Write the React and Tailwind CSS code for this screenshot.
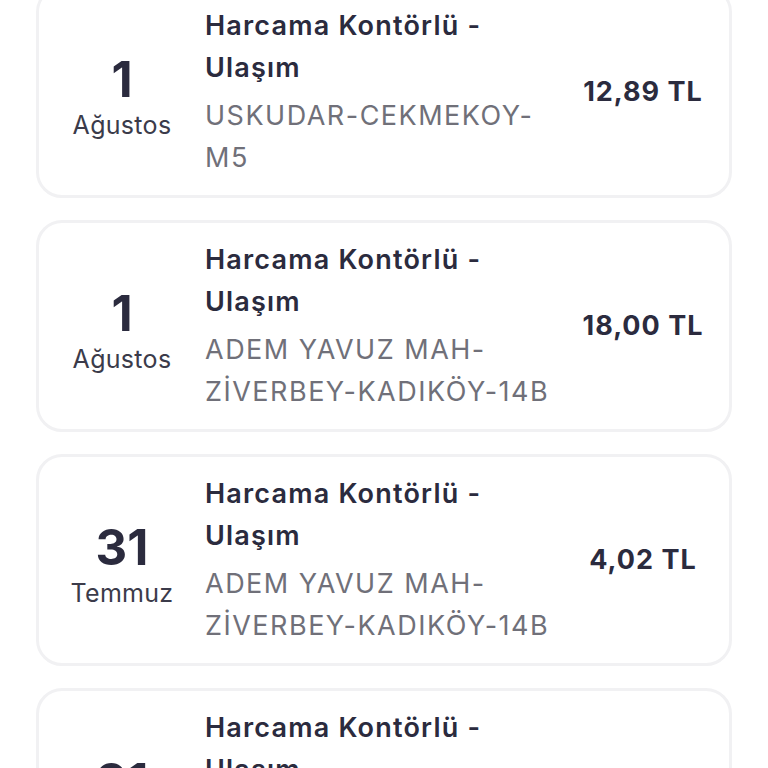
const items = [
  { day: "1", month: "Ağustos", route: "USKUDAR-CEKMEKOY-M5", amount: "12,89 TL" },
  { day: "1", month: "Ağustos", route: "ADEM YAVUZ MAH-ZİVERBEY-KADIKÖY-14B", amount: "18,00 TL" },
  { day: "31", month: "Temmuz", route: "ADEM YAVUZ MAH-ZİVERBEY-KADIKÖY-14B", amount: "4,02 TL" },
  { day: "31", month: "Temmuz", route: "ADEM YAVUZ MAH-ZİVERBEY-KADIKÖY-14B", amount: "4,02 TL" },
];

function TxCard({ item }) {
  return (
    <div className="grid grid-cols-[166px_352px_1fr] items-center rounded-[26px] border-[3px] border-[#f1f1f3] bg-white py-[16px]">
      <div className="flex flex-col items-center pt-[14px]">
        <span className="text-[49px] leading-[50px] font-bold text-[#2b2b3e]">{item.day}</span>
        <span className="mt-[2px] text-[25px] leading-[36px] tracking-[0.3px] text-[#3b3b4a]">{item.month}</span>
      </div>
      <div className="flex flex-col">
        <span className="text-[27px] leading-[42px] font-semibold tracking-[1.2px] text-[#2b2b3e]">Harcama Kontörlü - Ulaşım</span>
        <span className="mt-[6px] text-[27px] leading-[42px] tracking-[1.5px] text-[#707079] break-words">{item.route}</span>
      </div>
      <div className="text-center text-[27px] font-bold tracking-[1px] text-[#2b2b3e]">{item.amount}</div>
    </div>
  );
}

export default function App() {
  return (
    <div
      className="h-[768px] overflow-hidden bg-white"
      style={{ fontFamily: "Inter, 'Noto Sans', sans-serif" }}
    >
      <div className="-mt-[14px] flex flex-col gap-[22px] pl-[36px] pr-[36px]">
        {items.map((item, i) => (
          <TxCard key={i} item={item} />
        ))}
      </div>
    </div>
  );
}
